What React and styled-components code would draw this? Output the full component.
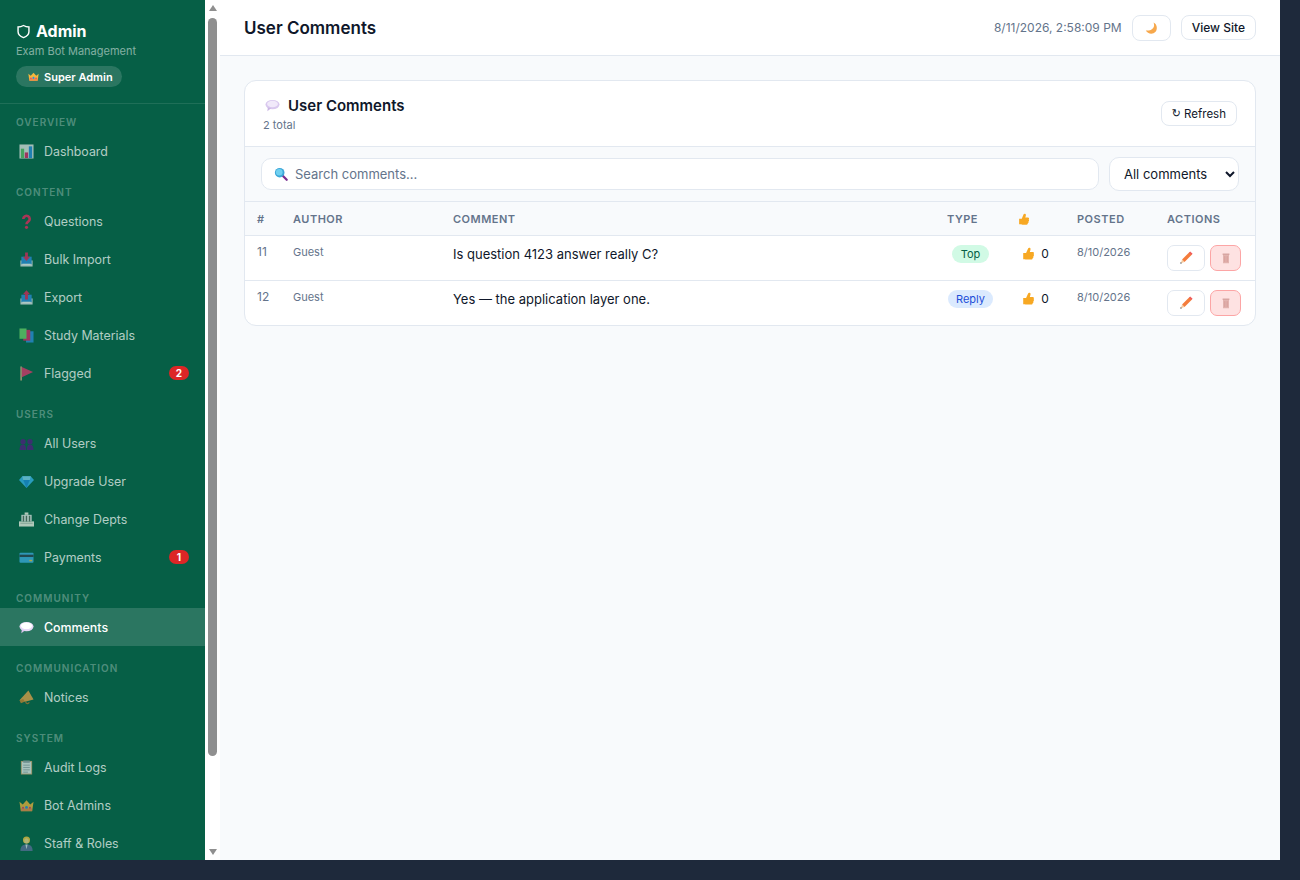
import React from "react";
import styled, { createGlobalStyle } from "styled-components";

const GlobalStyle = createGlobalStyle`
  html, body {
    margin: 0;
    padding: 0;
    background: #1e293b;
    font-family: Inter, "Noto Sans", sans-serif;
  }
  * {
    box-sizing: border-box;
  }
`;

// small colour icons, all on a 16 x 16 grid
const ICONS = {
  shield: (
    <path d="M8 1.6c2 1.2 3.8 1.6 5.8 1.6v5c0 3-2.400 5-5.800 6.300C4.600 13.200 2.200 11.200 2.200 8.200v-5c2 0 3.800-.4 5.800-1.600z" fill="none" stroke="#fff" strokeWidth="1.500" />
  ),
  chart: (
    <>
      <rect x="0.500" y="0.500" width="15" height="15" fill="#e6e7e8" />
      <rect x="2" y="5" width="3.500" height="10" fill="#5fc26a" />
      <rect x="6.200" y="9" width="3.500" height="6" fill="#e0246a" />
      <rect x="10.500" y="2.500" width="3.500" height="12.500" fill="#2b8fe0" />
    </>
  ),
  question: (
    <>
      <path d="M4.600 5.400a3.400 3.400 0 1 1 5.200 2.800C8.500 9 8 9.600 8 11" fill="none" stroke="#f0245e" strokeWidth="2.800" />
      <circle cx="8" cy="14.200" r="1.700" fill="#f0245e" />
    </>
  ),
  inbox: (
    <>
      <path d="M1.500 9h13v6.500h-13z" fill="#dfe4e8" />
      <rect x="2.500" y="5" width="11" height="8" fill="#2b8fe0" />
      <path d="M6.500 0.500h3v4.500h2.300L8 9.500 4.200 5h2.300z" fill="#e0245e" />
      <rect x="3.500" y="12.500" width="9" height="1.500" fill="#f6f7f8" />
    </>
  ),
  outbox: (
    <>
      <path d="M1.500 9h13v6.500h-13z" fill="#dfe4e8" />
      <rect x="2.500" y="5" width="11" height="8" fill="#2b8fe0" />
      <path d="M6.500 10h3V4.500h2.300L8 0.200 4.200 4.500h2.300z" fill="#e0245e" />
      <rect x="3.500" y="12.500" width="9" height="1.500" fill="#f6f7f8" />
    </>
  ),
  books: (
    <>
      <rect x="7.500" y="3.500" width="8" height="12" fill="#2b8fe0" />
      <rect x="4.500" y="2" width="7.500" height="11.500" fill="#e0246a" />
      <rect x="0.500" y="0.500" width="7.500" height="11" fill="#6cd26a" />
    </>
  ),
  flag: (
    <>
      <rect x="1.500" y="0.500" width="1.500" height="15" fill="#e8b98a" />
      <path d="M3 1l12 5.500L3 12z" fill="#e8336e" />
    </>
  ),
  users: (
    <>
      <circle cx="4.300" cy="6" r="2.800" fill="#531c82" />
      <circle cx="11.700" cy="6" r="2.800" fill="#531c82" />
      <path d="M0.500 15c0-4 1.300-6 3.800-6s3.300 2 3.300 6z" fill="#531c82" />
      <path d="M8.400 15c0-4 .8-6 3.300-6s3.800 2 3.800 6z" fill="#531c82" />
    </>
  ),
  gem: (
    <>
      <path d="M3.500 2.500h9L16 6.500 8 15 0 6.500z" fill="#38b6f0" />
      <path d="M4.500 6.500h7L8 15z" fill="#1c8fe0" />
      <path d="M3.500 2.500h9l-1 4h-7z" fill="#7fd6fa" />
    </>
  ),
  bank: (
    <>
      <rect x="0" y="10" width="16" height="5.500" fill="#f8f5ea" />
      <rect x="2.500" y="3" width="11" height="7" fill="#f0f0f0" />
      <path d="M6 0.500h4v2.500H6z" fill="#f8f5ea" />
      <path d="M4 4h1.500v6H4zM7.200 4h1.500v6H7.200zM10.500 4H12v6h-1.500z" fill="#5a6b60" />
      <rect x="1.500" y="11.500" width="13" height="1" fill="#b4bfb7" />
    </>
  ),
  card: (
    <>
      <rect x="0.500" y="3" width="15" height="10.500" rx="1" fill="#3fb0e8" />
      <rect x="0.500" y="5" width="15" height="2.500" fill="#2d3f52" />
      <rect x="11" y="10.500" width="3" height="1.500" fill="#f5c542" />
    </>
  ),
  bubble: (
    <>
      <ellipse cx="8" cy="7" rx="7.500" ry="5" fill="#e6d8f6" />
      <ellipse cx="8" cy="6.200" rx="6" ry="3.500" fill="#ffffff" />
      <path d="M3 10l-.5 4 4-3z" fill="#d9c7ee" />
    </>
  ),
  thought: (
    <>
      <ellipse cx="8" cy="7" rx="7.500" ry="5" fill="#d9c8ee" />
      <ellipse cx="8" cy="6.400" rx="5.800" ry="3.400" fill="#f1e9fa" />
      <path d="M3 10l-.5 4 4-3z" fill="#cbb6e4" />
    </>
  ),
  megaphone: (
    <>
      <path d="M0.500 11L10 0.500l5.500 9.500-9 2.500z" fill="#eda54a" />
      <path d="M0.500 11l1.500 3 4-1.500-1.500-3z" fill="#cf842e" />
      <path d="M7 12.500c.5 2.500 3 2.500 4 .5" fill="none" stroke="#b0762e" strokeWidth="1.300" />
    </>
  ),
  clipboard: (
    <>
      <rect x="2" y="1" width="12" height="14.500" fill="#d2a877" />
      <rect x="3" y="2" width="10" height="12.500" fill="#eceef0" />
      <rect x="4.500" y="0.500" width="7" height="2.500" fill="#9aa5ad" />
      <path d="M4.500 5.500h7M4.500 8h7M4.500 10.500h7M4.500 13h5" stroke="#9aa5ad" strokeWidth="0.900" />
    </>
  ),
  crown: (
    <>
      <path d="M0.500 4l3.500 3L8 2.500 12 7l3.500-3-1.500 10H2z" fill="#f6b73c" />
      <rect x="2" y="11" width="12" height="3" fill="#f08a4a" />
      <circle cx="8" cy="10" r="1.500" fill="#2b8fe0" />
      <circle cx="4.300" cy="10.500" r="1.100" fill="#e8336e" />
      <circle cx="11.700" cy="10.500" r="1.100" fill="#e8336e" />
    </>
  ),
  staff: (
    <>
      <path d="M1.500 16c0-4.500 1.500-7 6.500-7s6.500 2.500 6.500 7z" fill="#5d6f9c" />
      <path d="M6.800 9L8 14l1.200-5z" fill="#dfe6ee" />
      <circle cx="8" cy="4.300" r="3.800" fill="#f5c63f" />
      <ellipse cx="8" cy="5.200" rx="2.500" ry="2.700" fill="#f7d98a" />
    </>
  ),
  moon: (
    <path d="M10.500 0.500c2.200 5-.5 10.500-9.500 10 2 4 8.500 5.500 12 1.500 3-3.500 1.500-10-2.500-11.500z" fill="#f7a84c" />
  ),
  thumb: (
    <path d="M1.500 7.500H5L7.500 1.800c.5-1.300 2.800-1.100 3 .4.100 1.200-.4 2.800-.9 3.800h3.600c1.700 0 2 2 1 2.700.9.800.7 2.200-.3 2.600.5 1 .1 2.100-.9 2.400.2 1.100-.5 1.800-1.600 1.800H6c-1.200 0-1.500-.5-4.500-.5z" fill="#f7a823" />
  ),
  pencil: (
    <>
      <path d="M11.500 1.500l3 3-9 9-3-3z" fill="#f47c3c" />
      <path d="M12.500 0.500l3 3-1.500 1.500-3-3z" fill="#ef5b5b" />
      <path d="M2.500 10.500l3 3-4.500 1.500z" fill="#f5c99b" />
      <path d="M0.800 13.500l1.700 1.700-2.200.5z" fill="#555" />
    </>
  ),
  trash: (
    <>
      <rect x="4" y="4" width="8" height="11" fill="#e2b4b0" />
      <path d="M6 5.500v8M8 5.500v8M10 5.500v8" stroke="#d79c98" strokeWidth="0.900" />
      <rect x="3.500" y="2" width="9" height="2" fill="#d8a5a2" />
    </>
  ),
  search: (
    <>
      <path d="M10 10l4.500 4.500" stroke="#7b2f8f" strokeWidth="2.600" strokeLinecap="round" />
      <circle cx="6.500" cy="6.500" r="5.500" fill="#3ba7d8" />
      <circle cx="6" cy="6" r="3.800" fill="#6fd0f0" />
    </>
  ),
};

const NAV_GROUPS = [
  { label: "Overview", items: [{ icon: "chart", text: "Dashboard" }] },
  {
    label: "Content",
    items: [
      { icon: "question", text: "Questions" },
      { icon: "inbox", text: "Bulk Import" },
      { icon: "outbox", text: "Export" },
      { icon: "books", text: "Study Materials" },
      { icon: "flag", text: "Flagged", badge: 2 },
    ],
  },
  {
    label: "Users",
    items: [
      { icon: "users", text: "All Users" },
      { icon: "gem", text: "Upgrade User" },
      { icon: "bank", text: "Change Depts" },
      { icon: "card", text: "Payments", badge: 1 },
    ],
  },
  { label: "Community", items: [{ icon: "bubble", text: "Comments", active: true }] },
  { label: "Communication", items: [{ icon: "megaphone", text: "Notices" }] },
  {
    label: "System",
    items: [
      { icon: "clipboard", text: "Audit Logs" },
      { icon: "crown", text: "Bot Admins" },
      { icon: "staff", text: "Staff & Roles" },
    ],
  },
];

const COMMENTS = [
  { id: 11, author: "Guest", text: "Is question 4123 answer really C?", type: "Top", likes: 0, date: "8/10/2026" },
  { id: 12, author: "Guest", text: "Yes — the application layer one.", type: "Reply", likes: 0, date: "8/10/2026" },
];

const Svg = styled.svg`
  display: block;
  flex: none;
  width: ${(p) => p.$size}px;
  height: ${(p) => p.$size}px;
  opacity: ${(p) => p.$fade ?? 1};
`;

const Icon = ({ name, size = 14, fade }) => (
  <Svg viewBox="0 0 16 16" $size={size} $fade={fade}>
    {ICONS[name]}
  </Svg>
);

const Layout = styled.div`
  display: flex;
  width: 1280px;
  height: 860px;
  overflow: hidden;
  background: #f8fafc;
`;

const Sidebar = styled.aside`
  flex: 0 0 205px;
  height: 100%;
  overflow: hidden;
  background: #065f46;
`;

const ScrollRail = styled.div`
  flex: 0 0 15px;
  display: flex;
  flex-direction: column;
  align-items: center;
  height: 100%;
  background: #fff;
`;

const ScrollArrow = styled.div`
  width: 0;
  height: 0;
  margin: ${(p) => (p.$down ? "auto 0 5px" : "5px 0 0")};
  border-left: 4.5px solid transparent;
  border-right: 4.5px solid transparent;
  border-bottom: ${(p) => (p.$down ? "0" : "6px solid #8f8f8f")};
  border-top: ${(p) => (p.$down ? "6px solid #8f8f8f" : "0")};
`;

const ScrollThumb = styled.div`
  width: 9px;
  height: 738px;
  margin-top: 7px;
  border-radius: 5px;
  background: #8f8f8f;
`;

const Brand = styled.div`
  padding: 20px 16px 16px;
  border-bottom: 1px solid rgba(255, 255, 255, 0.1);
`;

const BrandTitle = styled.div`
  display: flex;
  align-items: center;
  gap: 5px;
  font-size: 16px;
  line-height: 22px;
  font-weight: 700;
  color: #fff;
`;

const BrandSub = styled.div`
  margin-top: 2px;
  font-size: 11px;
  line-height: 14px;
  color: rgba(255, 255, 255, 0.5);
`;

const RoleBadge = styled.div`
  display: inline-flex;
  align-items: center;
  gap: 5px;
  height: 21px;
  margin-top: 8px;
  padding: 0 9px 0 12px;
  border-radius: 11px;
  background: rgba(255, 255, 255, 0.15);
  font-size: 11px;
  font-weight: 600;
  color: #fff;
`;

const Nav = styled.nav`
  padding-top: 12px;
`;

const Group = styled.div`
  & + & {
    margin-top: 16px;
  }
`;

const GroupLabel = styled.div`
  margin-bottom: 4px;
  padding: 0 16px;
  font-size: 10px;
  line-height: 12px;
  font-weight: 600;
  letter-spacing: 1px;
  text-transform: uppercase;
  color: rgba(255, 255, 255, 0.3);
`;

const NavItem = styled.a`
  display: flex;
  align-items: center;
  height: 38px;
  padding: 0 16px 0 19px;
  font-size: 12.4px;
  font-weight: ${(p) => (p.$active ? 500 : 400)};
  color: ${(p) => (p.$active ? "#fff" : "rgba(255, 255, 255, 0.7)")};
  background: ${(p) => (p.$active ? "rgba(255, 255, 255, 0.15)" : "transparent")};
`;

const NavIcon = styled.span`
  flex: 0 0 25px;
`;

const NavCount = styled.span`
  margin-left: auto;
  min-width: 20px;
  height: 14px;
  border-radius: 7px;
  background: #dc2626;
  color: #fff;
  font-size: 10px;
  line-height: 14px;
  font-weight: 700;
  text-align: center;
`;

const Main = styled.main`
  flex: 1;
  min-width: 0;
  display: flex;
  flex-direction: column;
`;

const TopBar = styled.header`
  display: flex;
  align-items: center;
  height: 56px;
  padding: 0 24px;
  background: #fff;
  border-bottom: 1px solid #e2e8f0;
`;

const PageTitle = styled.h1`
  margin: 0;
  font-size: 17px;
  font-weight: 600;
  color: #0f172a;
`;

const Clock = styled.span`
  margin-left: auto;
  font-size: 12px;
  color: #64748b;
`;

const Button = styled.button`
  display: inline-flex;
  align-items: center;
  justify-content: center;
  gap: 3px;
  height: 25px;
  padding: 0 10px;
  border: 1px solid #e2e8f0;
  border-radius: 8px;
  background: #fff;
  font-family: inherit;
  font-size: 12px;
  font-weight: 500;
  color: #0f172a;
`;

const MoonButton = styled(Button)`
  width: 39px;
  height: 26px;
  margin: 0 10px;
  padding: 2px 0 0;
`;

const RefreshGlyph = styled.span`
  font-family: "DejaVu Sans", sans-serif;
  font-size: 11px;
`;

const RefreshButton = styled(Button)`
  font-size: 11.5px;
  font-weight: 400;
`;

const Content = styled.div`
  padding: 24px;
`;

const Card = styled.section`
  border: 1px solid #e2e8f0;
  border-radius: 12px;
  background: #fff;
  overflow: hidden;
`;

const CardHead = styled.div`
  display: flex;
  align-items: center;
  justify-content: space-between;
  height: 66px;
  padding: 0 18px;
  border-bottom: 1px solid #e2e8f0;
`;

const CardTitle = styled.div`
  display: flex;
  align-items: center;
  gap: 8px;
  padding-left: 2px;
  font-size: 15px;
  line-height: 20px;
  font-weight: 600;
  color: #0f172a;
`;

const CardSub = styled.div`
  margin-top: 2px;
  font-size: 11px;
  line-height: 14px;
  color: #64748b;
`;

const Toolbar = styled.div`
  display: flex;
  align-items: center;
  gap: 10px;
  height: 55px;
  padding: 0 16px;
  background: #f8fafc;
  border-bottom: 1px solid #e2e8f0;
`;

const SearchWrap = styled.div`
  position: relative;
  flex: 1;
  display: flex;
`;

const SearchIcon = styled.span`
  position: absolute;
  top: 9px;
  left: 13px;
`;

const Search = styled.input`
  flex: 1;
  height: 32px;
  padding: 0 12px 0 33px;
  border: 1px solid #e2e8f0;
  border-radius: 10px;
  background: #fff;
  font-family: inherit;
  font-size: 13px;
  color: #0f172a;
  &::placeholder {
    color: #64748b;
  }
`;

const Filter = styled.select`
  width: 130px;
  height: 34px;
  padding: 0 10px;
  border: 1px solid #e2e8f0;
  border-radius: 10px;
  background: #fff;
  font-family: inherit;
  font-size: 13px;
  color: #0f172a;
`;

const Table = styled.table`
  width: 100%;
  border-collapse: collapse;
  table-layout: fixed;
`;

const Th = styled.th`
  height: 33px;
  padding: 2px 12px 0;
  background: #f8fafc;
  border-bottom: 1px solid #e2e8f0;
  text-align: left;
  font-size: 11px;
  font-weight: 600;
  letter-spacing: 0.5px;
  text-transform: uppercase;
  color: #64748b;
`;

const Row = styled.tr`
  & + & td {
    border-top: 1px solid #e2e8f0;
  }
`;

const Td = styled.td`
  height: 44px;
  padding: 9px 12px;
  vertical-align: top;
  font-size: ${(p) => (p.$small ? "11px" : "12px")};
  line-height: 14px;
  color: #64748b;
`;

const CommentCell = styled(Td)`
  padding-top: 10px;
  font-size: 13px;
  line-height: 16px;
  color: #0f172a;
`;

const CenterCell = styled(Td)`
  text-align: center;
  color: #0f172a;
`;

const LikeCount = styled.div`
  display: flex;
  align-items: center;
  justify-content: center;
  gap: 6px;
  padding-top: 1px;
  font-size: 12px;
  line-height: 16px;
  color: #0f172a;
`;

const TypePill = styled.span`
  display: inline-block;
  height: 18px;
  padding: 0 8.500px;
  border-radius: 9px;
  font-size: 11px;
  line-height: 18px;
  font-weight: 400;
  background: ${(p) => (p.$type === "Top" ? "#d1fae5" : "#dbeafe")};
  color: ${(p) => (p.$type === "Top" ? "#065f46" : "#1d4ed8")};
`;

const Actions = styled.div`
  display: flex;
  gap: 5px;
`;

const IconButton = styled.button`
  display: flex;
  align-items: center;
  justify-content: center;
  width: ${(p) => (p.$danger ? "31px" : "38px")};
  height: 26px;
  padding: 0;
  border: 1px solid ${(p) => (p.$danger ? "#fca5a5" : "#e2e8f0")};
  border-radius: 7px;
  background: ${(p) => (p.$danger ? "#fee2e2" : "#fff")};
`;

const COLUMNS = [36, 160, 494, 71, 59, 90, 100];

export default function App() {
  return (
    <>
      <GlobalStyle />
      <Layout>
        <Sidebar>
          <Brand>
            <BrandTitle>
              <Icon name="shield" size={15} />
              Admin
            </BrandTitle>
            <BrandSub>Exam Bot Management</BrandSub>
            <RoleBadge>
              <Icon name="crown" size={11} />
              Super Admin
            </RoleBadge>
          </Brand>
          <Nav>
            {NAV_GROUPS.map((group) => (
              <Group key={group.label}>
                <GroupLabel>{group.label}</GroupLabel>
                {group.items.map((item) => (
                  <NavItem key={item.text} $active={item.active}>
                    <NavIcon>
                      <Icon name={item.icon} size={15} fade={item.active ? 1 : 0.7} />
                    </NavIcon>
                    {item.text}
                    {item.badge && <NavCount>{item.badge}</NavCount>}
                  </NavItem>
                ))}
              </Group>
            ))}
          </Nav>
        </Sidebar>
        <ScrollRail>
          <ScrollArrow />
          <ScrollThumb />
          <ScrollArrow $down />
        </ScrollRail>
        <Main>
          <TopBar>
            <PageTitle>User Comments</PageTitle>
            <Clock>8/11/2026, 2:58:09 PM</Clock>
            <MoonButton>
              <Icon name="moon" size={13} />
            </MoonButton>
            <Button>View Site</Button>
          </TopBar>
          <Content>
            <Card>
              <CardHead>
                <div>
                  <CardTitle>
                    <Icon name="thought" size={15} />
                    User Comments
                  </CardTitle>
                  <CardSub>2 total</CardSub>
                </div>
                <RefreshButton>
                  <RefreshGlyph>↻</RefreshGlyph>
                  Refresh
                </RefreshButton>
              </CardHead>
              <Toolbar>
                <SearchWrap>
                  <SearchIcon>
                    <Icon name="search" size={14} />
                  </SearchIcon>
                  <Search placeholder="Search comments..." />
                </SearchWrap>
                <Filter defaultValue="all">
                  <option value="all">All comments</option>
                  <option value="top">Top</option>
                  <option value="reply">Replies</option>
                </Filter>
              </Toolbar>
              <Table>
                <colgroup>
                  {COLUMNS.map((w, i) => (
                    <col key={i} style={{ width: w }} />
                  ))}
                </colgroup>
                <thead>
                  <tr>
                    <Th>#</Th>
                    <Th>Author</Th>
                    <Th>Comment</Th>
                    <Th>Type</Th>
                    <Th>
                      <Icon name="thumb" size={12} />
                    </Th>
                    <Th>Posted</Th>
                    <Th>Actions</Th>
                  </tr>
                </thead>
                <tbody>
                  {COMMENTS.map((c) => (
                    <Row key={c.id}>
                      <Td>{c.id}</Td>
                      <Td $small>{c.author}</Td>
                      <CommentCell>{c.text}</CommentCell>
                      <CenterCell>
                        <TypePill $type={c.type}>{c.type}</TypePill>
                      </CenterCell>
                      <CenterCell>
                        <LikeCount>
                          <Icon name="thumb" size={13} />
                          {c.likes}
                        </LikeCount>
                      </CenterCell>
                      <Td $small>{c.date}</Td>
                      <Td>
                        <Actions>
                          <IconButton>
                            <Icon name="pencil" size={13} />
                          </IconButton>
                          <IconButton $danger>
                            <Icon name="trash" size={12} />
                          </IconButton>
                        </Actions>
                      </Td>
                    </Row>
                  ))}
                </tbody>
              </Table>
            </Card>
          </Content>
        </Main>
      </Layout>
    </>
  );
}
